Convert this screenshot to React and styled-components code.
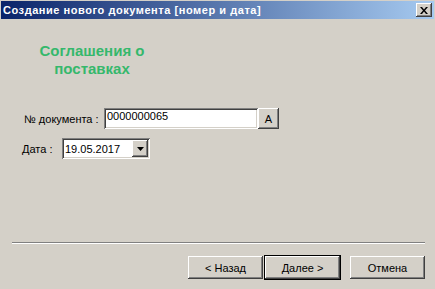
import React from 'react';
import styled, { createGlobalStyle } from 'styled-components';

const GlobalStyle = createGlobalStyle`
  html, body {
    margin: 0;
    padding: 0;
    background: #d4d0c8;
  }
  body {
    font-family: "Liberation Sans", Arial, sans-serif;
    font-size: 11px;
    color: #000;
  }
`;

const raised = `
  box-shadow: inset -1px -1px #404040, inset 1px 1px #ffffff,
    inset -2px -2px #808080, inset 2px 2px #d4d0c8;
`;

const sunken = `
  box-shadow: inset 1px 1px #808080, inset -1px -1px #ffffff,
    inset 2px 2px #404040, inset -2px -2px #d4d0c8;
`;

const Window = styled.div`
  width: 435px;
  height: 289px;
  display: flex;
  flex-direction: column;
  box-sizing: border-box;
`;

const TitleBar = styled.div`
  height: 18px;
  margin: 1px 1px 0;
  padding: 0 2px 0 2px;
  display: flex;
  align-items: center;
  justify-content: space-between;
  background: linear-gradient(to right, #0a246a, #a6caf0);
`;

const TitleText = styled.span`
  color: #fff;
  font-weight: bold;
  font-size: 11px;
  letter-spacing: 0.55px;
  white-space: nowrap;
`;

const CloseButton = styled.div`
  width: 16px;
  height: 14px;
  background: #d4d0c8;
  display: flex;
  align-items: center;
  justify-content: center;
  ${raised}
`;

const Heading = styled.div`
  margin: 23px 0 0 12px;
  width: 160px;
  text-align: center;
  color: #35b86c;
  font-weight: bold;
  font-size: 15px;
  line-height: 18px;
`;

const Form = styled.div`
  margin-top: 30px;
  display: flex;
  flex-direction: column;
  gap: 9px;
`;

const Row = styled.div`
  display: flex;
  align-items: center;
  padding-left: ${p => p.$indent}px;
`;

const Label = styled.span`
  width: ${p => p.$width}px;
  white-space: nowrap;
`;

const TextField = styled.div`
  width: 154px;
  height: 21px;
  box-sizing: border-box;
  padding: 2px 3px 0;
  line-height: 13px;
  background: #fff;
  ${sunken}
`;

const SmallButton = styled.div`
  width: 21px;
  height: 21px;
  display: flex;
  align-items: center;
  justify-content: center;
  background: #d4d0c8;
  ${raised}
`;

const Combo = styled.div`
  width: 88px;
  height: 21px;
  box-sizing: border-box;
  padding: 2px 2px 2px 3px;
  display: flex;
  align-items: center;
  justify-content: space-between;
  background: #fff;
  ${sunken}
`;

const DropButton = styled.div`
  width: 16px;
  height: 17px;
  display: flex;
  align-items: center;
  justify-content: center;
  background: #d4d0c8;
  ${raised}
`;

const Footer = styled.div`
  margin-top: auto;
  padding-bottom: 10px;
`;

const Separator = styled.div`
  margin: 0 10px 12px 12px;
  border-top: 1px solid #808080;
  border-bottom: 1px solid #ffffff;
`;

const ButtonRow = styled.div`
  display: flex;
  justify-content: flex-end;
  padding-right: 10px;
`;

const Button = styled.div`
  width: 75px;
  height: 23px;
  display: flex;
  align-items: center;
  justify-content: center;
  background: #d4d0c8;
  margin-left: ${p => p.$gap || 0}px;
  ${raised}
  ${p => p.$default && 'outline: 1px solid #000;'}
`;

export default function App() {
  return (
    <Window>
      <GlobalStyle />
      <TitleBar>
        <TitleText>Создание нового документа [номер и дата]</TitleText>
        <CloseButton>
          <svg width="8" height="7" viewBox="0 0 8 7">
            <path d="M0 0h2l2 2.5L6 0h2L5 3.5 8 7H6L4 4.5 2 7H0l3-3.5z" fill="#000" />
          </svg>
        </CloseButton>
      </TitleBar>

      <Heading>
        Соглашения о<br />поставках
      </Heading>

      <Form>
        <Row $indent={24}>
          <Label $width={80}>№ документа :</Label>
          <TextField>0000000065</TextField>
          <SmallButton>A</SmallButton>
        </Row>
        <Row $indent={22}>
          <Label $width={40}>Дата :</Label>
          <Combo>
            <span>19.05.2017</span>
            <DropButton>
              <svg width="7" height="4" viewBox="0 0 7 4">
                <path d="M0 0h7L3.5 4z" fill="#000" />
              </svg>
            </DropButton>
          </Combo>
        </Row>
      </Form>

      <Footer>
        <Separator />
        <ButtonRow>
          <Button>&lt; Назад</Button>
          <Button $default $gap={2}>Далее &gt;</Button>
          <Button $gap={10}>Отмена</Button>
        </ButtonRow>
      </Footer>
    </Window>
  );
}
